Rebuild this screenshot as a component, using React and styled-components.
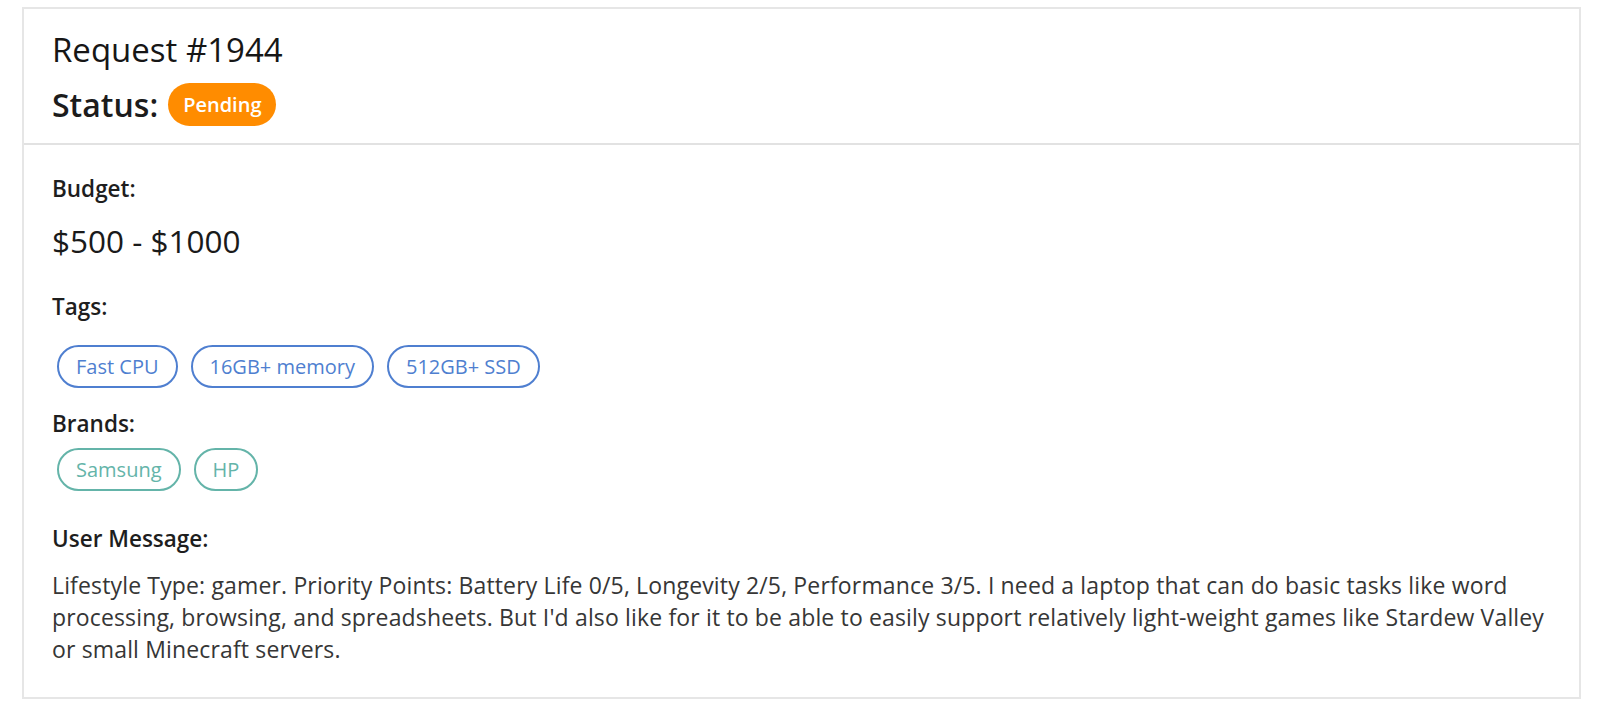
import React from 'react';
import styled, { createGlobalStyle } from 'styled-components';

const GlobalStyle = createGlobalStyle`
  html, body {
    margin: 0;
    padding: 0;
    background: #ffffff;
  }
  body {
    font-family: 'Open Sans', 'Noto Sans', sans-serif;
    color: #1c1c1c;
  }
`;

const request = {
  id: 1944,
  status: 'Pending',
  budget: '$500 - $1000',
  tags: ['Fast CPU', '16GB+ memory', '512GB+ SSD'],
  brands: ['Samsung', 'HP'],
  message:
    "Lifestyle Type: gamer. Priority Points: Battery Life 0/5, Longevity 2/5, Performance 3/5. I need a laptop that can do basic tasks like word processing, browsing, and spreadsheets. But I'd also like for it to be able to easily support relatively light-weight games like Stardew Valley or small Minecraft servers.",
};

const App = () => {
  return (
    <>
      <GlobalStyle />
      <Page>
        <Card>
          <Header>
            <Title>Request #{request.id}</Title>
            <StatusRow>
              <StatusLabel>Status:</StatusLabel>
              <Badge>{request.status}</Badge>
            </StatusRow>
          </Header>
          <Body>
            <Label $mt="0">Budget:</Label>
            <Budget>{request.budget}</Budget>
            <Label $mt="34px">Tags:</Label>
            <PillRow $mt="24px">
              {request.tags.map((t) => (
                <Pill key={t} $color="#4f7fd0">
                  {t}
                </Pill>
              ))}
            </PillRow>
            <Label $mt="22px">Brands:</Label>
            <PillRow $mt="10px">
              {request.brands.map((b) => (
                <Pill key={b} $color="#64b4a9">
                  {b}
                </Pill>
              ))}
            </PillRow>
            <Label $mt="34px">User Message:</Label>
            <Message>{request.message}</Message>
          </Body>
        </Card>
      </Page>
    </>
  );
};

const Page = styled.div`
  padding: 7px 19px 10px 22px;
`;

const Card = styled.div`
  border: 2px solid #e6e6e6;
  background: #fff;
`;

const Header = styled.div`
  padding: 21px 28px 17px;
  border-bottom: 2px solid #e2e2e2;
`;

const Title = styled.h2`
  margin: 0 0 13px;
  font-size: 33px;
  font-weight: 400;
  line-height: 40px;
  color: #161616;
`;

const StatusRow = styled.div`
  display: flex;
  align-items: center;
  gap: 10px;
`;

const StatusLabel = styled.span`
  font-size: 32px;
  font-weight: 600;
  line-height: 40px;
`;

const Badge = styled.span`
  display: inline-flex;
  align-items: center;
  height: 43px;
  padding: 0 15px;
  border-radius: 22px;
  background: #ff8c00;
  color: #fff;
  font-size: 20px;
  font-weight: 600;
`;

const Body = styled.div`
  padding: 30px 28px 32px;
`;

const Label = styled.div`
  margin-top: ${(p) => p.$mt};
  font-size: 22.5px;
  font-weight: 600;
  line-height: 28px;
  color: #1e1e1e;
`;

const Budget = styled.div`
  margin-top: 20px;
  font-size: 31.5px;
  line-height: 36px;
  color: #1a1a1a;
`;

const PillRow = styled.div`
  display: flex;
  gap: 13px;
  padding-left: 5px;
  margin-top: ${(p) => p.$mt};
`;

const Pill = styled.span`
  display: inline-flex;
  align-items: center;
  height: 43px;
  box-sizing: border-box;
  padding: 0 17px;
  border: 2px solid ${(p) => p.$color};
  border-radius: 22px;
  color: ${(p) => p.$color};
  font-size: 20px;
`;

const Message = styled.p`
  margin: 16px 0 0;
  font-size: 23px;
  line-height: 32px;
  letter-spacing: 0.15px;
  color: #363636;
`;

export default App;
